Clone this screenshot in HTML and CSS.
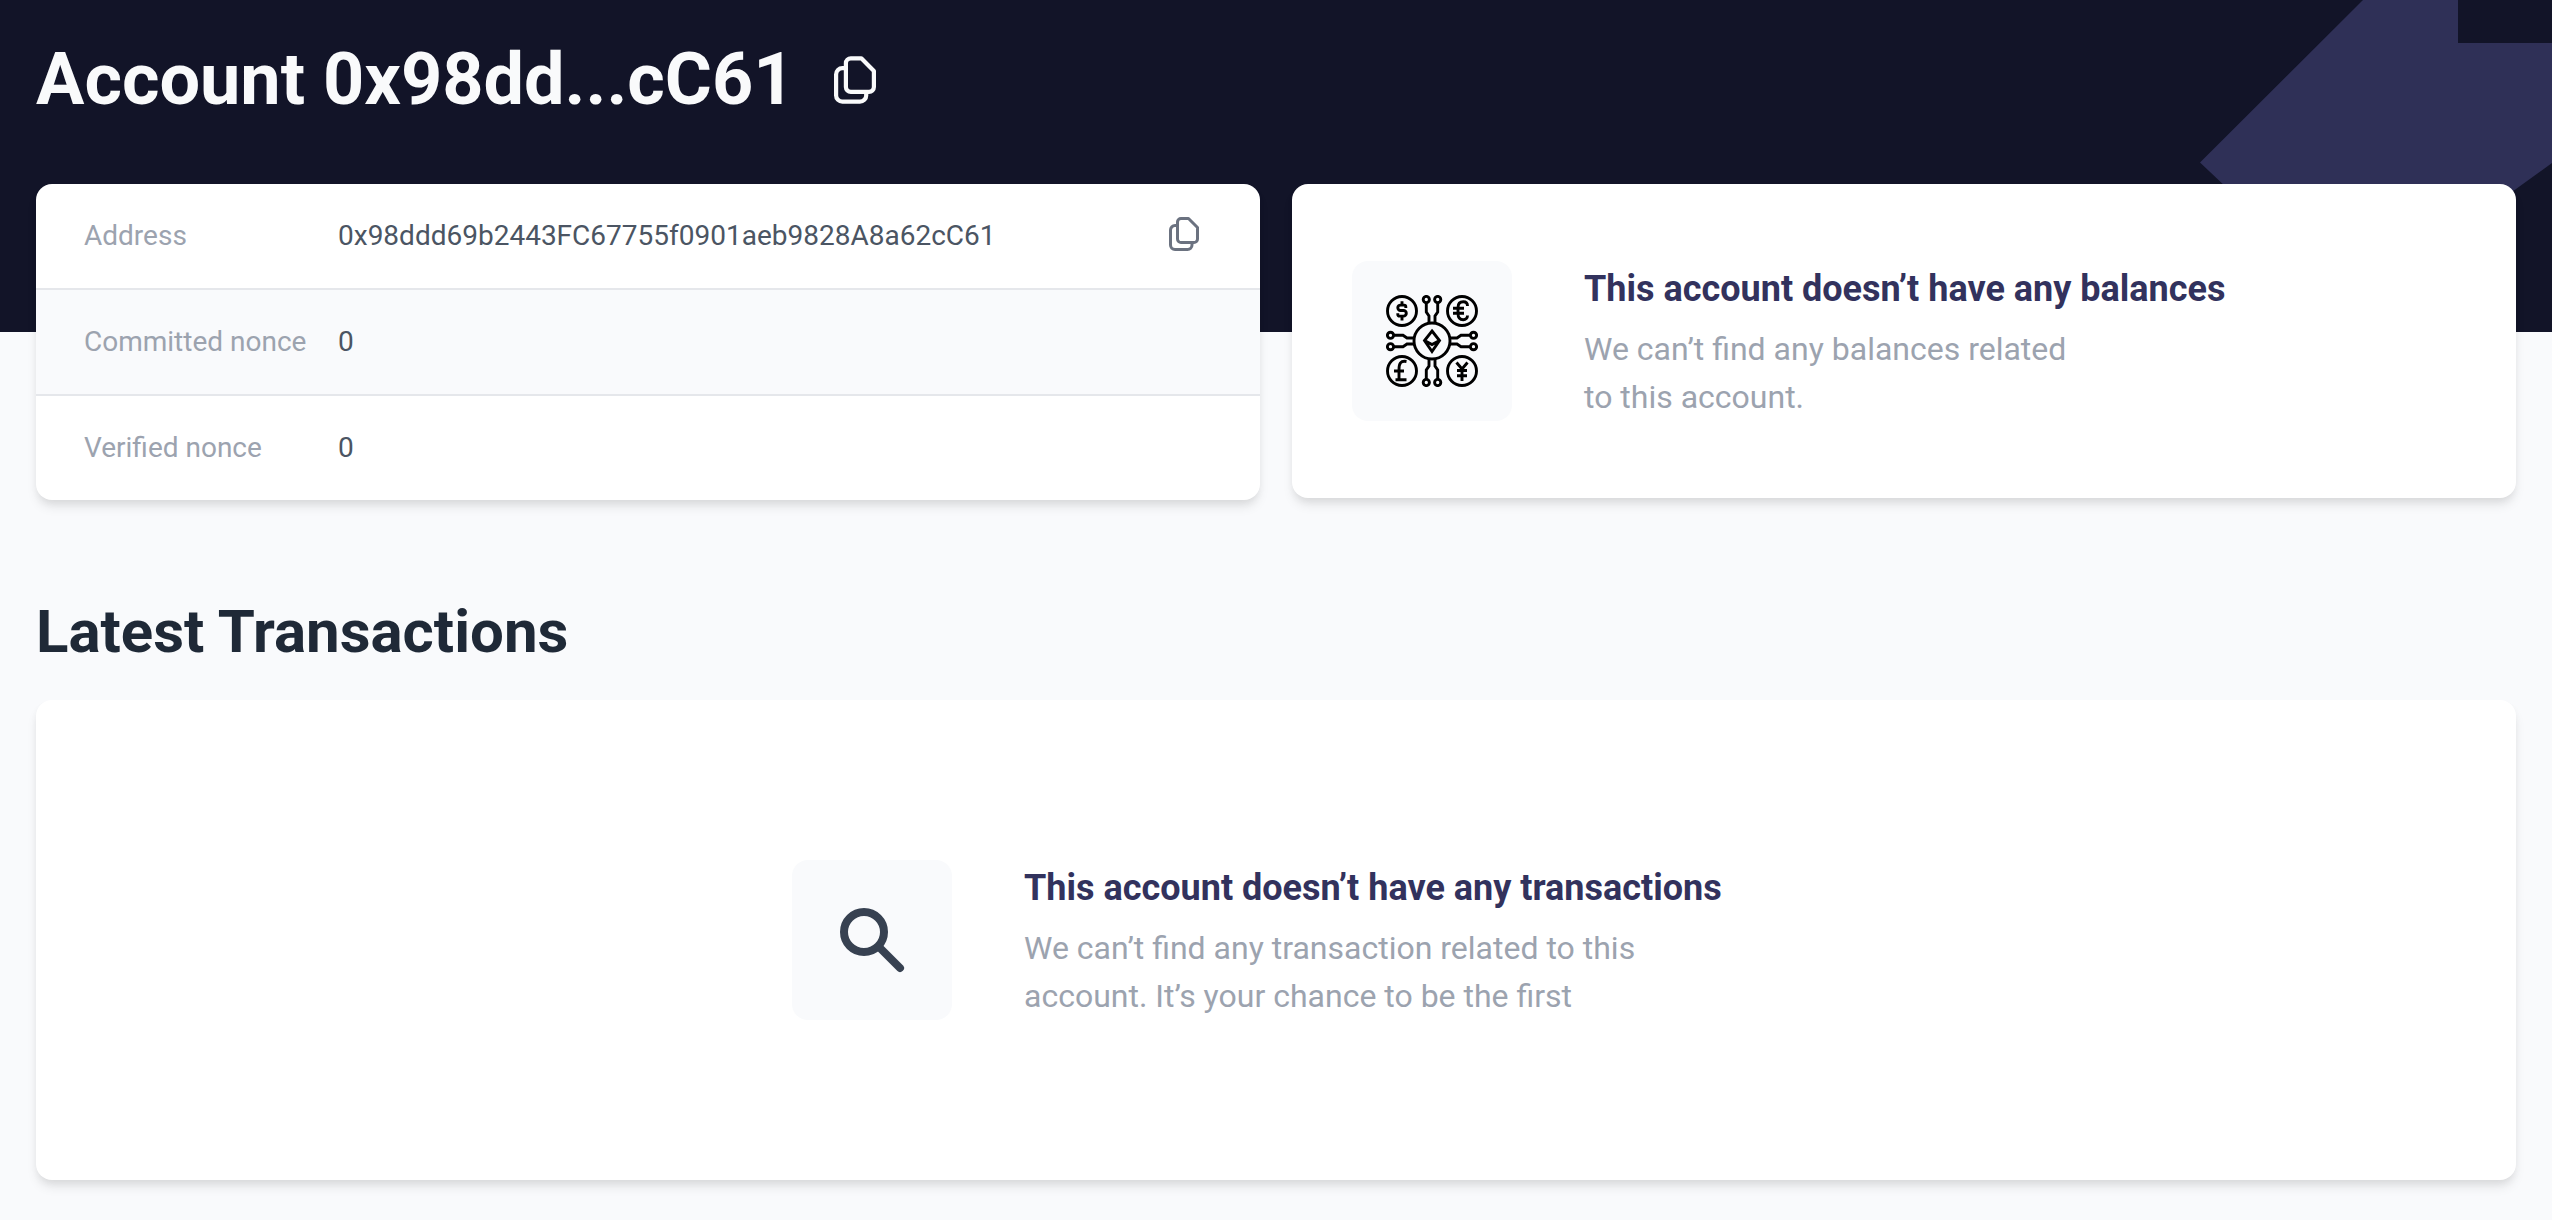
FILE: index.html
```html
<!DOCTYPE html>
<html lang="en">
<head>
<meta charset="utf-8">
<title>Account 0x98dd...cC61</title>
<link rel="stylesheet" href="styles.css">
</head>
<body>
<svg width="0" height="0" class="sprite">
  <symbol id="copy" viewBox="0 0 30 34">
    <path d="M8.500 8.500H6a4.500 4.500 0 0 0-4.500 4.500v15A4.500 4.500 0 0 0 6 32.500h12.500a4.500 4.500 0 0 0 4.500-4.500v-2.500M12 1.500h7.500l9 9V22a3.500 3.500 0 0 1-3.500 3.500H12A3.500 3.500 0 0 1 8.500 22V5A3.500 3.500 0 0 1 12 1.500z" fill="none" stroke="currentColor" stroke-width="3" stroke-linejoin="round"/>
  </symbol>
</svg>
<div class="page">
  <svg class="decor" viewBox="0 0 352 332"><path d="M163 0H258V43H352V163L316 189L248 240H82L0 162.500z" fill="#2f3057"/></svg>
  <header class="title-row">
    <h1 class="title">Account 0x98dd...cC61</h1>
    <svg class="copy-title"><use href="#copy"/></svg>
  </header>
  <main>
    <div class="cards">
      <section class="card info">
        <div class="row"><span class="label">Address</span><span class="value">0x98ddd69b2443FC67755f0901aeb9828A8a62cC61</span><svg class="copy-row"><use href="#copy"/></svg></div>
        <div class="row alt"><span class="label">Committed nonce</span><span class="value">0</span></div>
        <div class="row"><span class="label">Verified nonce</span><span class="value">0</span></div>
      </section>
      <section class="card balances">
        <div class="tile">
          <svg class="coins" viewBox="0 0 92 92" fill="none" stroke="#000" stroke-width="2.900">
            <circle cx="16" cy="16" r="14.500"/><circle cx="76" cy="16" r="14.500"/><circle cx="16" cy="76" r="14.500"/><circle cx="76" cy="76" r="14.500"/>
            <circle cx="46" cy="46" r="18"/>
            <path d="M46 36L53.500 45.500L46 56.500L38.500 45.500zM38.500 45.500L46 49.500L53.500 45.500"/>
            <g id="wires">
              <circle cx="40.300" cy="4.500" r="3.100"/><circle cx="51.700" cy="4.500" r="3.100"/>
              <path d="M40.300 8v9l2.700 4v7M51.700 8v9l-2.700 4v7"/>
            </g>
            <use href="#wires" transform="rotate(90 46 46)"/><use href="#wires" transform="rotate(180 46 46)"/><use href="#wires" transform="rotate(270 46 46)"/>
            <path d="M19.800 13v-1.200a1.700 1.700 0 0 0-1.700-1.700h-3.600a2.700 2.700 0 0 0 0 5.400h3a2.800 2.800 0 0 1 0 5.600h-4a1.700 1.700 0 0 1-1.700-1.700v-1.200M16 6.300v4M16 21v4.500"/>
            <path d="M81.500 11c0-3-2-4.200-4.200-4.200c-4 0-5.300 3-5.300 5.700v6c0 4 2 6.200 5.300 6.200c2.500 0 4.200-2 4.200-4.200M67 13.200h11M67 18.300h11"/>
            <path d="M20.500 66.500c-6-1-7.500 2-7.500 8V84.500M8 76h10M9.500 84.700h11"/>
            <path d="M70.500 67.500l5.500 6.500l5.500-6.500M76 74v12M71 75.500h10M71 80.700h10"/>
          </svg>
        </div>
        <div class="message">
          <h3 class="message-title">This account doesn’t have any balances</h3>
          <p class="message-text">We can’t find any balances related<br>to this account.</p>
        </div>
      </section>
    </div>
    <h2 class="section-title">Latest Transactions</h2>
    <section class="card transactions">
      <div class="tile">
        <svg class="search" viewBox="0 0 66 66" fill="none" stroke="#374151"><circle cx="25" cy="25" r="20" stroke-width="8"/><path d="M40 40L61 61" stroke-width="8" stroke-linecap="round"/></svg>
      </div>
      <div class="message">
        <h3 class="message-title">This account doesn’t have any transactions</h3>
        <p class="message-text">We can’t find any transaction related to this<br>account. It’s your chance to be the first</p>
      </div>
    </section>
  </main>
</div>
</body>
</html>
```
FILE: styles.css
```css
* { box-sizing: border-box; }
body { margin: 0; font-family: Roboto, sans-serif; background: #f9fafc; }
h1, h2, h3, p { margin: 0; }
svg { display: block; flex: none; }
.sprite { position: absolute; }
.page { position: relative; height: 1220px; padding: 0 36px; overflow: hidden; background: linear-gradient(#121428 332px, #f9fafc 332px); }
.decor { position: absolute; top: 0; right: 0; width: 352px; height: 332px; }
.title-row { position: relative; display: flex; align-items: center; height: 184px; padding-bottom: 24px; }
.title { font-size: 72px; line-height: 80px; font-weight: 700; color: #f9fafb; white-space: nowrap; }
.copy-title { width: 42px; height: 48px; margin-left: 39px; color: #f9fafb; }
main { position: relative; }
.cards { display: grid; grid-template-columns: 1fr 1fr; gap: 32px; align-items: start; }
.card { background: #fff; border-radius: 16px; box-shadow: 0 8px 12px -2px rgba(0,0,0,.1), 0 4px 8px -2px rgba(0,0,0,.06); }
.info { overflow: hidden; height: 316px; }
.row { display: flex; align-items: center; height: 106px; padding: 0 61px 0 48px; border-bottom: 2px solid #e5e7eb; font-size: 28px; line-height: 40px; }
.row:last-child { height: 104px; border: 0; }
.alt { background: #f9fafc; }
.label { width: 254px; color: #9ca3af; }
.value { flex: 1; color: #4b5563; }
.copy-row { width: 30px; height: 34px; margin-bottom: 4px; color: #6b7280; }
.balances { display: flex; align-items: center; height: 314px; padding-left: 60px; }
.tile { display: grid; place-items: center; width: 160px; height: 160px; border-radius: 16px; background: #f9fafc; }
.coins { width: 92px; height: 92px; }
.message { margin-left: 72px; }
.message-title { font-size: 36px; line-height: 56px; font-weight: 700; color: #32325d; margin-bottom: 8px; }
.message-text { font-size: 32px; line-height: 48px; color: #9ca3af; }
.section-title { margin: 92px 0 28px; font-size: 60px; line-height: 80px; font-weight: 700; color: #1f2937; }
.transactions { display: flex; align-items: center; height: 480px; padding-left: 756px; }
.search { width: 66px; height: 66px; }
```
